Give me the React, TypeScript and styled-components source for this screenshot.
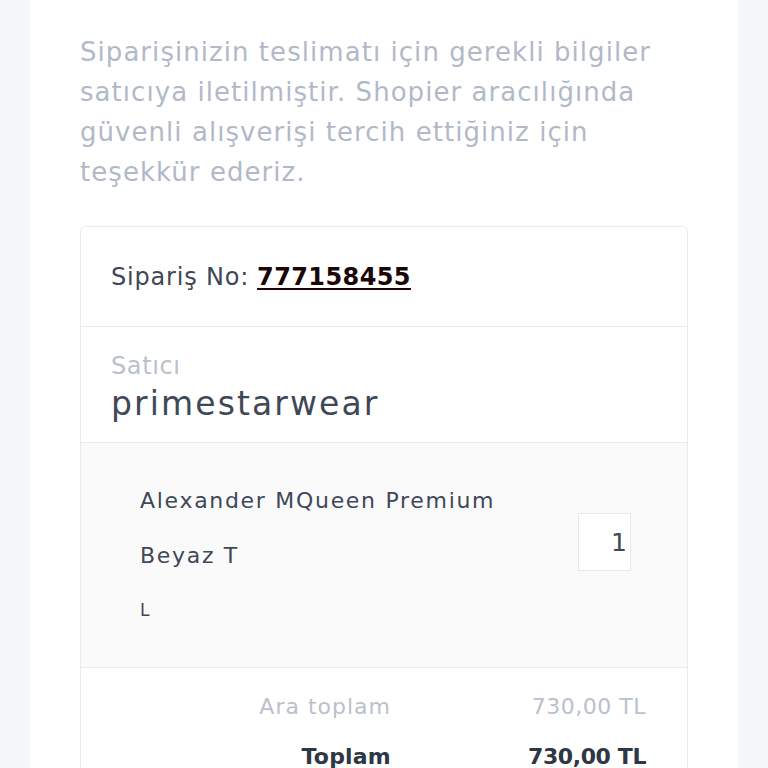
import styled, { createGlobalStyle } from "styled-components";

const GlobalStyle = createGlobalStyle`
  html, body {
    margin: 0;
    padding: 0;
    background: #f4f8f8;
  }
  body {
    font-family: "DejaVu Sans", "Open Sans", sans-serif;
    -webkit-font-smoothing: antialiased;
  }
`;

const Page = styled.div`
  width: 768px;
  height: 768px;
  overflow: hidden;
  display: flex;
  justify-content: center;
`;

const Panel = styled.div`
  width: 708px;
  background: #fff;
  padding: 32px 50px 0 50px;
  box-sizing: border-box;
`;

const Intro = styled.p`
  margin: 0 0 34px 0;
  font-size: 26px;
  line-height: 40px;
  letter-spacing: 1.05px;
  color: #b1b9c8;
`;

const Card = styled.div`
  border: 1px solid #e9eaec;
  border-radius: 6px;
  overflow: hidden;
`;

const Section = styled.div<{ $muted?: boolean }>`
  border-bottom: 1px solid #e9eaec;
  background: ${(p) => (p.$muted ? "#fafafa" : "#fff")};
`;

const OrderRow = styled(Section)`
  height: 99px;
  display: flex;
  align-items: center;
  padding: 0 30px;
  font-size: 24px;
  letter-spacing: 0.8px;
  color: #3e4857;
`;

const OrderNo = styled.a`
  margin-left: 8px;
  color: #1b0707;
  font-weight: 700;
  letter-spacing: 0.4px;
  text-decoration: underline;
  text-underline-offset: 3px;
`;

const Seller = styled(Section)`
  height: 116px;
  padding: 24px 30px 0;
  box-sizing: border-box;
`;

const SellerLabel = styled.div`
  font-size: 24px;
  line-height: 30px;
  letter-spacing: 0.6px;
  color: #b9c1cc;
`;

const SellerName = styled.div`
  font-size: 33px;
  line-height: 46px;
  letter-spacing: 2.1px;
  color: #3e4857;
`;

const Item = styled(Section)`
  height: 225px;
  box-sizing: border-box;
  padding: 30px 56px 0 59px;
  display: flex;
  align-items: flex-start;
  justify-content: space-between;
`;

const ItemInfo = styled.div`
  display: flex;
  flex-direction: column;
`;

const ItemLine = styled.div<{ $small?: boolean }>`
  font-size: ${(p) => (p.$small ? "17px" : "22px")};
  line-height: 55px;
  letter-spacing: ${(p) => (p.$small ? "0" : "1.7px")};
  color: #3e4857;
`;

const Qty = styled.div`
  width: 53px;
  height: 58px;
  margin-top: 40px;
  box-sizing: border-box;
  background: #fff;
  border: 1px solid #e6e7e9;
  display: flex;
  align-items: center;
  justify-content: flex-end;
  padding-right: 3px;
  font-size: 25px;
  color: #3e4857;
`;

const Totals = styled.div`
  display: grid;
  grid-template-columns: 1fr 255px;
  row-gap: 12px;
  padding: 20px 41px 0 0;
`;

const TotalCell = styled.div<{ $strong?: boolean; $value?: boolean }>`
  text-align: right;
  font-size: 22px;
  line-height: 38px;
  letter-spacing: ${(p) =>
    p.$strong ? (p.$value ? "-0.4px" : "0.2px") : p.$value ? "0.5px" : "1px"};
  font-weight: ${(p) => (p.$strong ? 700 : 400)};
  color: ${(p) => (p.$strong ? "#2e3744" : "#b9c1cc")};
`;

const rows = [
  { label: "Ara toplam", value: "730,00 TL", strong: false },
  { label: "Toplam", value: "730,00 TL", strong: true },
];

export default function App() {
  return (
    <Page>
      <GlobalStyle />
      <Panel>
        <Intro>
          Siparişinizin teslimatı için gerekli bilgiler satıcıya iletilmiştir.
          Shopier aracılığında güvenli alışverişi tercih ettiğiniz için
          teşekkür ederiz.
        </Intro>
        <Card>
          <OrderRow>
            Sipariş No:<OrderNo href="#">777158455</OrderNo>
          </OrderRow>
          <Seller>
            <SellerLabel>Satıcı</SellerLabel>
            <SellerName>primestarwear</SellerName>
          </Seller>
          <Item $muted>
            <ItemInfo>
              <ItemLine>Alexander MQueen Premium</ItemLine>
              <ItemLine>Beyaz T</ItemLine>
              <ItemLine $small>L</ItemLine>
            </ItemInfo>
            <Qty>1</Qty>
          </Item>
          <Totals>
            {rows.map((r) => (
              <>
                <TotalCell $strong={r.strong}>{r.label}</TotalCell>
                <TotalCell $strong={r.strong} $value>
                  {r.value}
                </TotalCell>
              </>
            ))}
          </Totals>
        </Card>
      </Panel>
    </Page>
  );
}
